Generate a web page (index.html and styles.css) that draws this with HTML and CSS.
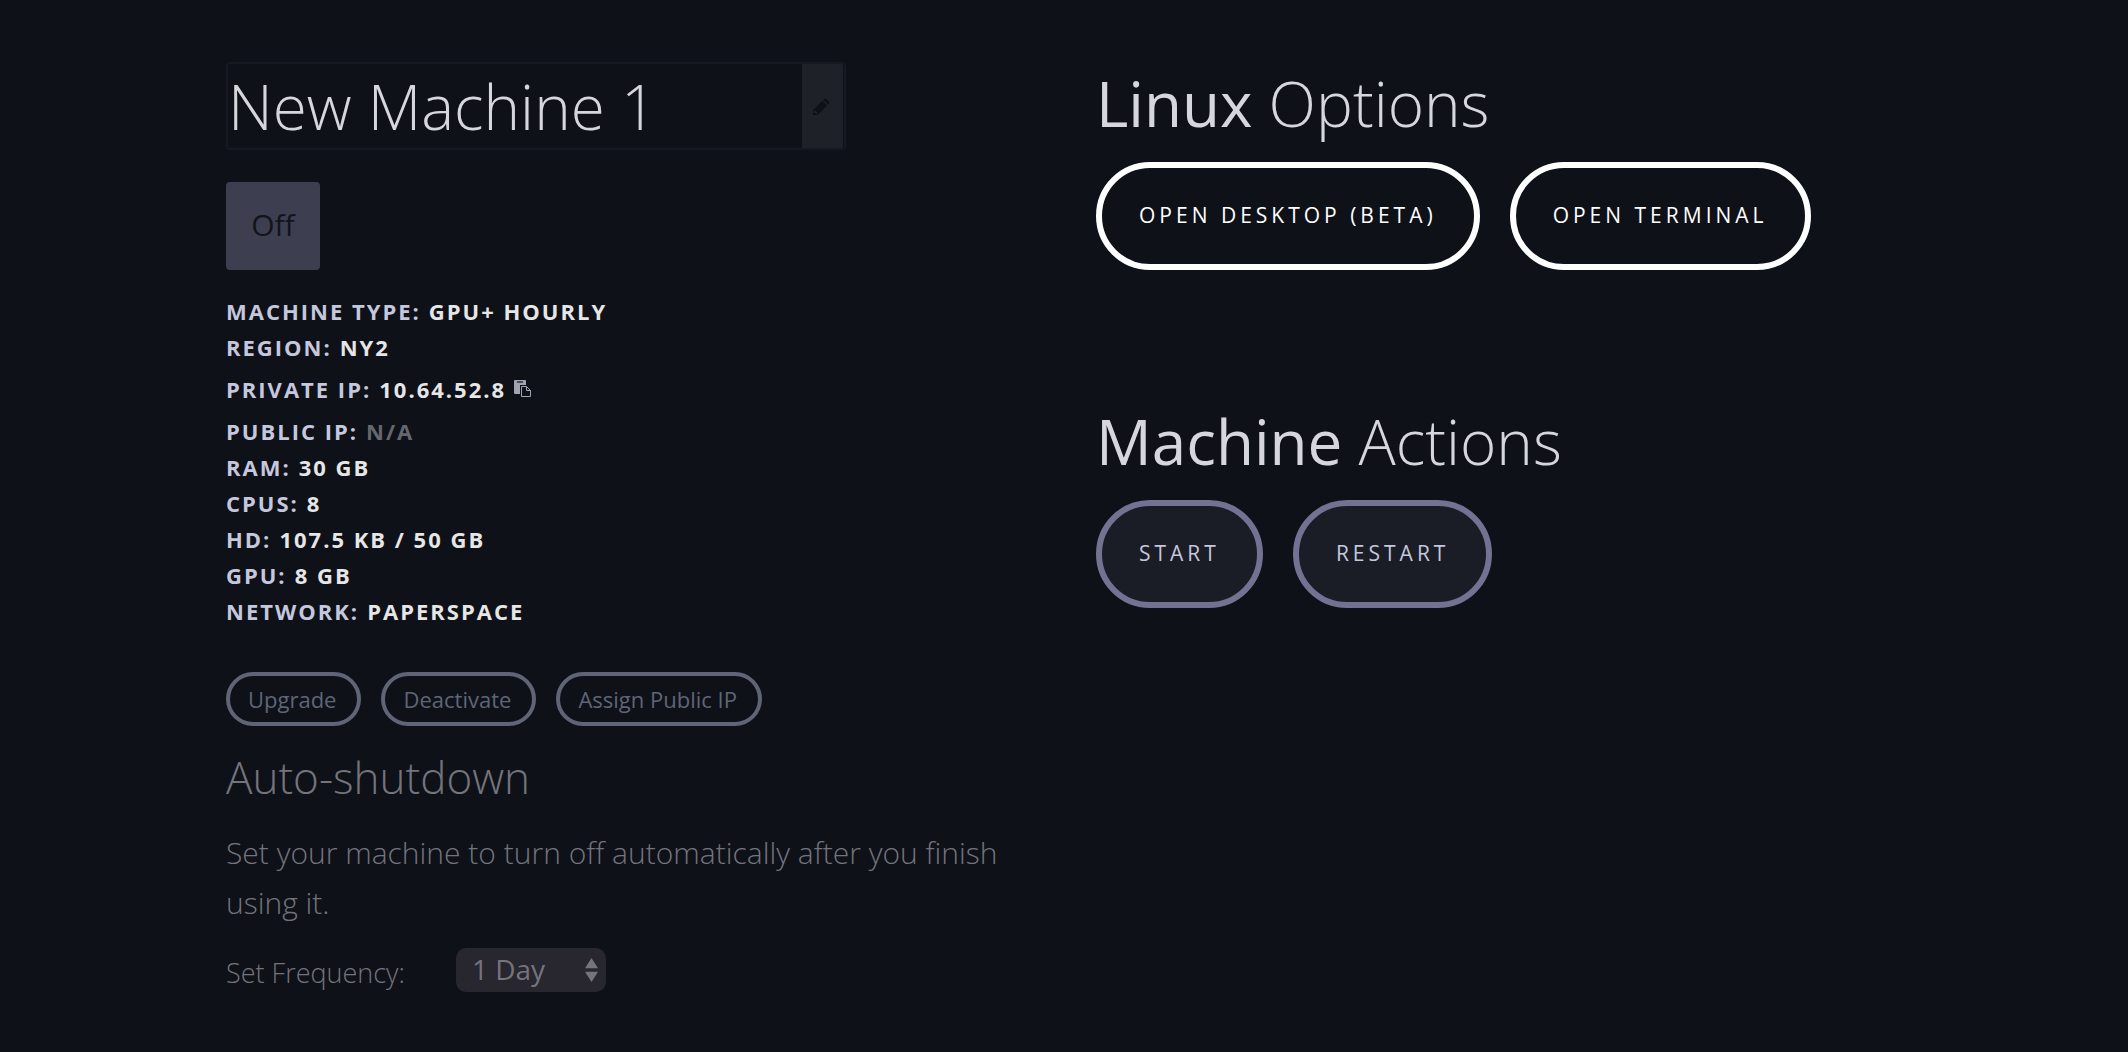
FILE: index.html
```html
<!DOCTYPE html>
<html lang="en">
<head>
<meta charset="utf-8">
<meta name="viewport" content="width=device-width, initial-scale=1">
<title>New Machine 1</title>
<link rel="stylesheet" href="styles.css">
</head>
<body>
<main class="page">
  <section class="machine">
    <form class="name-field">
      <input class="name-input" type="text" value="New Machine 1" aria-label="Machine name">
      <button class="name-edit" type="button" aria-label="Edit name">
        <svg class="pencil" viewBox="0 0 18 18" aria-hidden="true">
          <path d="M0 18v-5L10 3l5 5L5 18zM11 2l1-1q1-1 2 0l3 3q1 1 0 2l-1 1z"/>
          <path class="pencil-tip" d="M2 13l3 3-1 1H3v-1H1v-2z"/>
        </svg>
      </button>
    </form>
    <div class="state">Off</div>
    <dl class="specs">
      <div class="spec"><dt>Machine type:</dt> <dd>GPU+ Hourly</dd></div>
      <div class="spec"><dt>Region:</dt> <dd>NY2</dd></div>
      <div class="spec spec-copy"><dt>Private IP:</dt> <dd>10.64.52.8</dd>
        <button class="copy" type="button" aria-label="Copy private IP">
          <svg viewBox="0 0 18 18" aria-hidden="true">
            <path class="board" d="M1 0h10q1 0 1 1v4H6v9H1q-1 0-1-1V1q0-1 1-1z"/>
            <path class="clip" d="M3 1h6v2H3z"/>
            <path class="sheet" d="M7.500 6.500h5l4 4v6h-9zM12.500 6.500v4h4"/>
          </svg>
        </button>
      </div>
      <div class="spec"><dt>Public IP:</dt> <dd class="none">N/A</dd></div>
      <div class="spec"><dt>RAM:</dt> <dd>30 GB</dd></div>
      <div class="spec"><dt>CPUs:</dt> <dd>8</dd></div>
      <div class="spec"><dt>HD:</dt> <dd>107.5 KB / 50 GB</dd></div>
      <div class="spec"><dt>GPU:</dt> <dd>8 GB</dd></div>
      <div class="spec"><dt>Network:</dt> <dd>Paperspace</dd></div>
    </dl>
    <div class="manage">
      <button class="pill" type="button">Upgrade</button>
      <button class="pill" type="button">Deactivate</button>
      <button class="pill" type="button">Assign Public IP</button>
    </div>
    <h3 class="subtitle">Auto-shutdown</h3>
    <p class="note">Set your machine to turn off automatically after you finish using it.</p>
    <div class="frequency">
      <label class="frequency-label" for="frequency">Set Frequency:</label>
      <div class="select-wrap">
        <select id="frequency" class="select">
          <option>1 Day</option>
          <option>1 Week</option>
        </select>
        <svg class="arrows" viewBox="0 0 14 26" aria-hidden="true"><path d="M7 0l7 11H0zM7 26L0 15h14z"/></svg>
      </div>
    </div>
  </section>
  <div class="controls">
    <section class="group">
      <h2 class="title"><strong>Linux</strong> Options</h2>
      <div class="actions">
        <button class="action" type="button">Open Desktop (Beta)</button>
        <button class="action" type="button">Open Terminal</button>
      </div>
    </section>
    <section class="group">
      <h2 class="title"><strong>Machine</strong> Actions</h2>
      <div class="actions">
        <button class="action action-muted" type="button">Start</button>
        <button class="action action-muted" type="button">Restart</button>
      </div>
    </section>
  </div>
</main>
</body>
</html>
```
FILE: styles.css
```css
* { box-sizing: border-box; }

body {
  margin: 0;
  min-height: 100vh;
  background: #0e1118;
  color: #d6d7dc;
  font-family: "Open Sans", sans-serif;
  font-weight: 300;
}

h2, h3, p, dl, dd { margin: 0; }
button, input, select { font: inherit; color: inherit; }
svg { display: block; }

.page {
  display: grid;
  grid-template-columns: 1fr 1fr;
  gap: 64px;
  padding: 62px 226px 48px;
}

.name-field {
  display: flex;
  width: 620px;
  max-width: 100%;
  height: 88px;
  border: 2px solid #161922;
  border-radius: 4px;
  padding-right: 1px;
}
.name-input {
  flex: 1;
  min-width: 0;
  padding: 0;
  border: 0;
  background: none;
  font-size: 62px;
}
.name-edit {
  display: grid;
  place-items: center;
  width: 41px;
  padding: 0 2px 0 0;
  border: 0;
  border-radius: 0 2px 2px 0;
  background: #1f2129;
}
.pencil { width: 17px; height: 17px; fill: #0e1118; }
.pencil-tip { fill: #1f2129; }

.state {
  display: grid;
  place-items: center;
  width: 94px;
  height: 88px;
  margin-top: 32px;
  padding-bottom: 4px;
  border-radius: 4px;
  background: #3d3f50;
  color: #12141b;
  font-size: 30px;
  font-weight: 400;
}

.specs {
  margin-top: 23px;
  font-size: 22px;
  font-weight: 700;
  line-height: 36px;
  letter-spacing: 2px;
  text-transform: uppercase;
  color: #e6e6e6;
}
.spec { display: flex; align-items: center; gap: 8px; }
.spec dt { color: #c5c8dd; }
.spec .none { color: #65676f; }
.spec-copy { height: 48px; }
.copy {
  width: 18px;
  height: 18px;
  padding: 0;
  border: 0;
  background: none;
}
.board { fill: #a2a3b3; }
.clip { fill: #4c4e5b; }
.sheet { fill: #0e1118; stroke: #a2a3b3; }

.manage { display: flex; gap: 20px; margin-top: 43px; }
.pill {
  height: 54px;
  padding: 0 21px 0 18px;
  border: 4px solid #5f6577;
  border-radius: 27px;
  background: none;
  color: #5f6577;
  font-size: 22px;
  font-weight: 400;
}

.subtitle {
  margin-top: 21px;
  color: #74747d;
  font-size: 44px;
  font-weight: 300;
  line-height: 60px;
}
.note {
  margin-top: 21px;
  color: #74747d;
  font-size: 30px;
  line-height: 50px;
}
.frequency {
  display: flex;
  align-items: center;
  gap: 51px;
  margin-top: 20px;
  color: #74747d;
  font-size: 27px;
}
.frequency-label { padding-top: 4px; }
.select-wrap { position: relative; }
.select {
  display: block;
  appearance: none;
  width: 150px;
  height: 44px;
  padding: 0 16px 2px;
  border: 0;
  border-radius: 10px;
  background: #28262f;
  font-size: 28px;
  font-weight: 400;
}
.arrows {
  position: absolute;
  top: 9px;
  right: 8px;
  width: 13px;
  height: 26px;
  fill: #74747d;
  pointer-events: none;
}

.group + .group { margin-top: 130px; }
.title {
  font-size: 62px;
  font-weight: 300;
  line-height: 82px;
}
.title strong { font-weight: 400; }
.actions { display: flex; gap: 30px; margin-top: 18px; }
.action {
  height: 108px;
  padding: 0 37px 2px;
  border: 6px solid #fff;
  border-radius: 54px;
  background: none;
  color: #fff;
  font-size: 21px;
  font-weight: 400;
  letter-spacing: 4px;
  text-transform: uppercase;
}
.action-muted {
  border-color: #737292;
  background: #1b1d26;
  color: #c5c8dd;
}
```
